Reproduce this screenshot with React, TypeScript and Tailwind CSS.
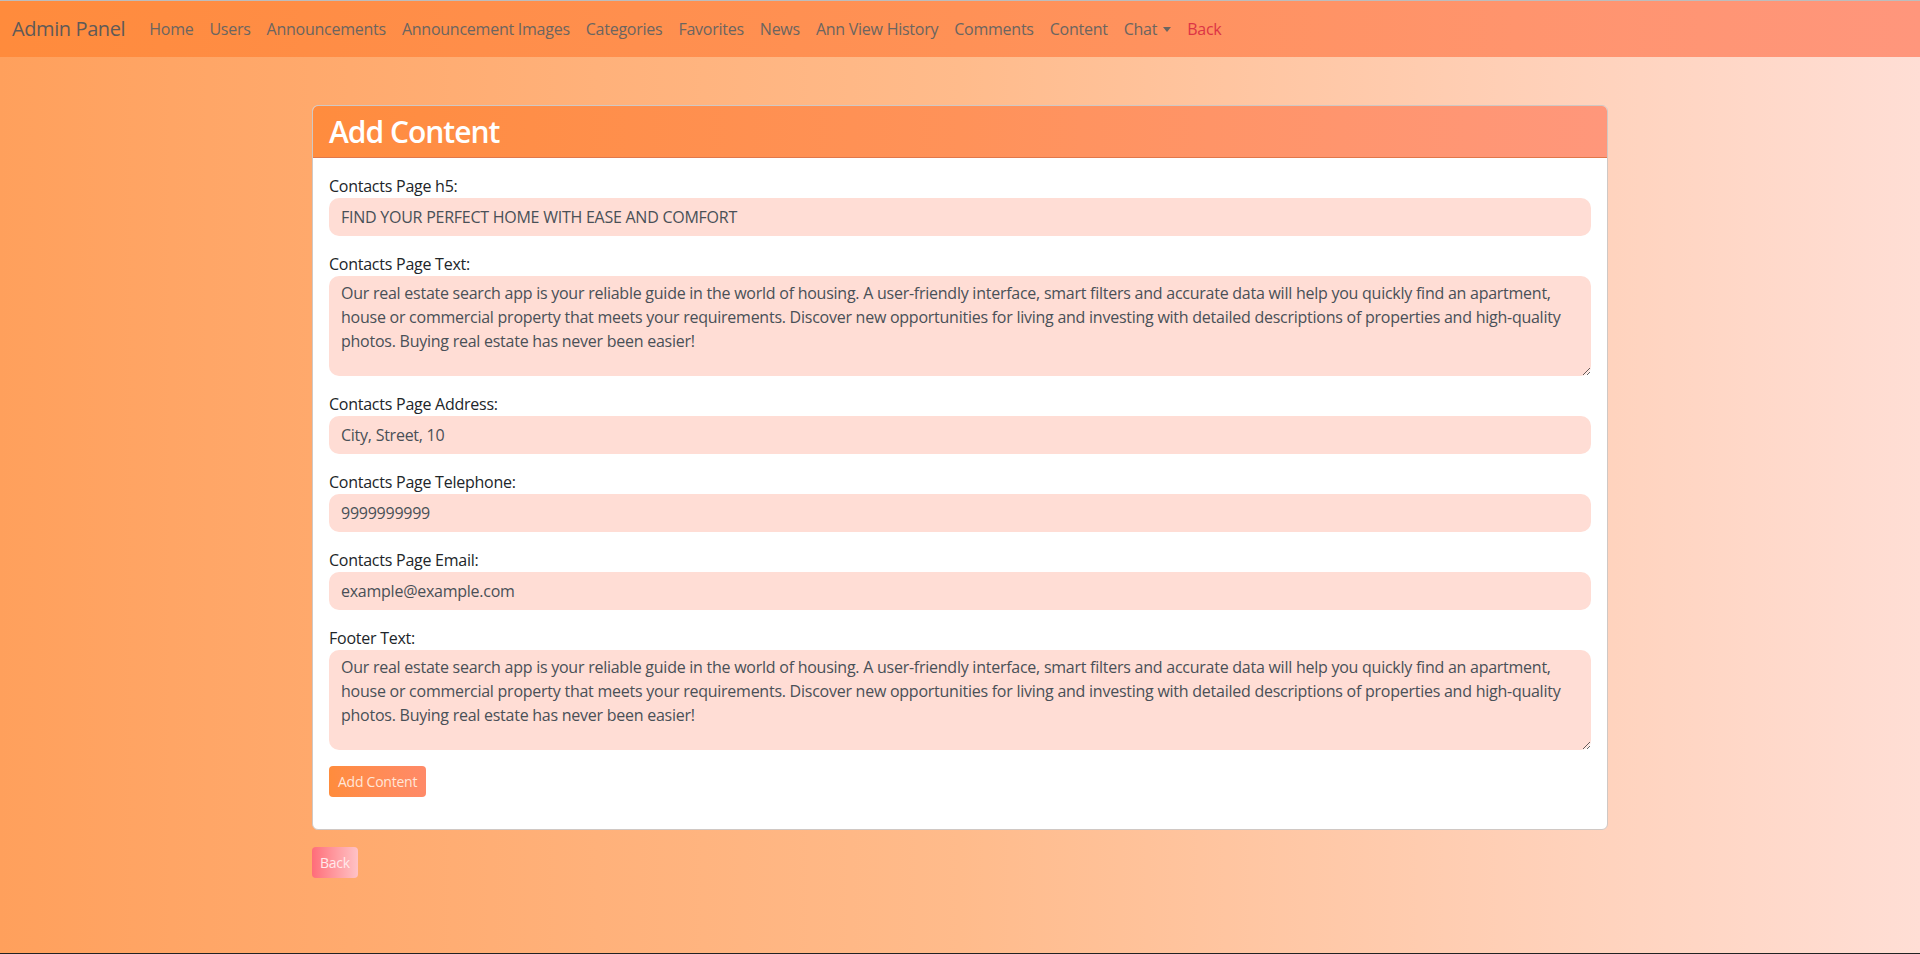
import React from "react";

const TEXT =
  "Our real estate search app is your reliable guide in the world of housing. A user-friendly interface, smart filters and accurate data will help you quickly find an apartment, house or commercial property that meets your requirements. Discover new opportunities for living and investing with detailed descriptions of properties and high-quality photos. Buying real estate has never been easier!";

const navItems = [
  "Home",
  "Users",
  "Announcements",
  "Announcement Images",
  "Categories",
  "Favorites",
  "News",
  "Ann View History",
  "Comments",
  "Content",
];

function Field({ label, value }: { label: string; value: string }) {
  return (
    <div className="mb-4">
      <label className="block text-[16px] leading-6 text-[#212529]">{label}</label>
      <input
        defaultValue={value}
        className="block w-full h-[38px] rounded-[10px] bg-[#ffddd5] px-3 text-[16px] tracking-[-0.25px] text-[#495057] outline-none border-0"
      />
    </div>
  );
}

function Area({ label, value }: { label: string; value: string }) {
  return (
    <div className="mb-4">
      <label className="block text-[16px] leading-6 text-[#212529]">{label}</label>
      <textarea
        defaultValue={value}
        className="block w-full h-[100px] rounded-[10px] bg-[#ffddd5] px-3 py-[5px] text-[16px] leading-6 tracking-[-0.25px] text-[#495057] outline-none border-0"
      />
    </div>
  );
}

export default function App() {
  return (
    <div
      className="h-[954px] w-full overflow-hidden bg-gradient-to-r from-[#ffa05c] via-[#ffbb8b] to-[#ffded5] border-t border-[#bdbdbd] border-b border-b-[#222] tracking-[-0.25px]"
      style={{ fontFamily: '"Open Sans", "Noto Sans", sans-serif' }}
    >
      <nav className="h-[56px] flex items-center px-3 bg-gradient-to-r from-[#ff8b3c] via-[#ff9156] to-[#ff967c]">
        <span className="text-[20px] text-[#5f5a57] mr-4 leading-[30px] tracking-[-0.4px]">Admin Panel</span>
        <div className="flex items-center">
          {navItems.map((n) => (
            <span key={n} className="px-2 text-[16px] text-[#6b6560] leading-6">
              {n}
            </span>
          ))}
          <span className="px-2 text-[16px] text-[#6b6560] leading-6 flex items-center">
            Chat
            <span className="ml-[6px] inline-block w-0 h-0 border-l-[4px] border-r-[4px] border-t-[5px] border-l-transparent border-r-transparent border-t-[#6b6560]" />
          </span>
          <span className="px-2 text-[16px] text-[#dc3545] leading-6">Back</span>
        </div>
      </nav>

      <div className="mx-auto w-[1320px] px-3 pt-[48px]">
        <div className="rounded-[6px] border border-[#d0c8c4] bg-white overflow-hidden">
          <div className="px-4 h-[52px] flex items-center bg-gradient-to-r from-[#ff8c3e] via-[#ff9259] to-[#ff977b] border-b border-[#e0784c]">
            <h2 className="text-[30px] font-semibold text-white leading-[38px] tracking-[-1px]">Add Content</h2>
          </div>
          <div className="px-4 pt-4 pb-8">
            <Field label="Contacts Page h5:" value="FIND YOUR PERFECT HOME WITH EASE AND COMFORT" />
            <Area label="Contacts Page Text:" value={TEXT} />
            <Field label="Contacts Page Address:" value="City, Street, 10" />
            <Field label="Contacts Page Telephone:" value="9999999999" />
            <Field label="Contacts Page Email:" value="example@example.com" />
            <Area label="Footer Text:" value={TEXT} />
            <button className="h-[31px] px-[9px] rounded-[4px] text-[14px] text-[#ffe6d8] bg-gradient-to-r from-[#ff8c3c] to-[#ff8a68]">
              Add Content
            </button>
          </div>
        </div>
        <button className="mt-[17px] h-[31px] px-2 rounded-[4px] text-[14px] text-[#ffe9eb] bg-gradient-to-r from-[#ff6c79] to-[#ffc2c6]">
          Back
        </button>
      </div>
    </div>
  );
}
